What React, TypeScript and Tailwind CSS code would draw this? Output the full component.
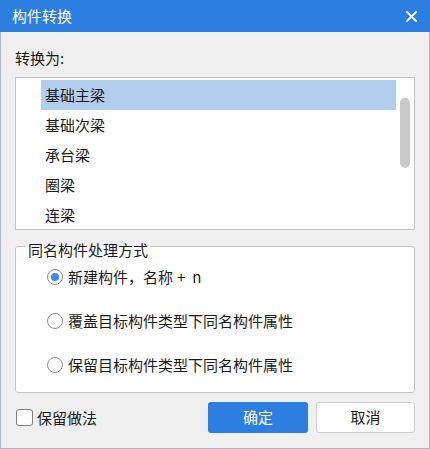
import React from "react";

const FONT = { fontFamily: '"Noto Sans CJK SC", "Microsoft YaHei", sans-serif' };

function Radio({ checked, label }: { checked?: boolean; label: React.ReactNode }) {
  return (
    <div className="flex h-[20px] items-center">
      <span className="flex h-[16px] w-[16px] items-center justify-center rounded-full border border-[#8f8f8f] bg-white">
        {checked && <span className="h-[8px] w-[8px] rounded-full bg-[#3a8cea]" />}
      </span>
      <span className="ml-[5px] flex text-[15px] leading-[20px] text-[#1a1a1a]">{label}</span>
    </div>
  );
}

export default function App() {
  const items = ["基础主梁", "基础次梁", "承台梁", "圈梁", "连梁"];
  return (
    <div style={FONT} className="flex h-[449px] w-[430px] flex-col border-x border-b border-[#aab6c6] bg-[#f0f0f0]">
      <div className="-mx-px flex h-[32px] shrink-0 items-center justify-between bg-[#2c7fe0] pl-[12px] pr-[12px]">
        <span className="text-[15px] leading-[20px] text-white">构件转换</span>
        <svg width="11" height="11" viewBox="0 0 11 11" className="mr-[1px]">
          <path d="M1 1L10 10M10 1L1 10" stroke="white" strokeWidth="1.9" strokeLinecap="square" />
        </svg>
      </div>
      <div className="flex flex-col px-[14px] pt-[16px]">
        <div className="h-[20px] text-[15px] leading-[20px] text-[#1a1a1a]">转换为:</div>
        <div className="mt-[9px] flex h-[153px] overflow-hidden border border-[#c4c4c4] bg-white pl-[25px]">
          <div className="flex w-[355px] flex-col pt-[2px]">
            {items.map((t, i) => (
              <div
                key={t}
                className={`flex h-[30px] shrink-0 items-center pl-[4px] text-[15px] text-[#1a1a1a] ${
                  i === 0 ? "bg-[#b3cdee]" : ""
                }`}
              >
                {t}
              </div>
            ))}
          </div>
          <div className="ml-[4px] mt-[20px] h-[70px] w-[10px] rounded-full bg-[#c9c9c9]" />
        </div>
        <fieldset className="mt-[4px] rounded-[3px] border border-[#c4c4c4] bg-white pb-[17px] pl-[31px]">
          <legend className="-ml-[21px] px-[2px] pt-[8px] text-[15px] leading-[16px] text-[#1a1a1a]">
            同名构件处理方式
          </legend>
          <div className="flex flex-col gap-[24px] pt-[9px]">
            <Radio
              checked
              label={
                <>
                  <span>新建构件，名称</span>
                  <span className="ml-[4px]">+</span>
                  <span className="ml-[7px]">n</span>
                </>
              }
            />
            <Radio label="覆盖目标构件类型下同名构件属性" />
            <Radio label="保留目标构件类型下同名构件属性" />
          </div>
        </fieldset>
        <div className="mt-[9px] flex h-[31px] items-center">
          <span className="ml-[1px] h-[17px] w-[17px] rounded-[3px] border border-[#7e7e7e] bg-white" />
          <span className="ml-[4px] text-[15px] leading-[20px] text-[#1a1a1a]">保留做法</span>
          <div className="ml-auto flex gap-[8px]">
            <button className="flex h-[31px] w-[100px] items-center justify-center rounded-[3px] bg-[#2c7fe0] text-[15px] text-white">
              确定
            </button>
            <button className="flex h-[31px] w-[99px] items-center justify-center rounded-[3px] border border-[#cfcfcf] bg-white text-[15px] text-[#1a1a1a]">
              取消
            </button>
          </div>
        </div>
      </div>
    </div>
  );
}
